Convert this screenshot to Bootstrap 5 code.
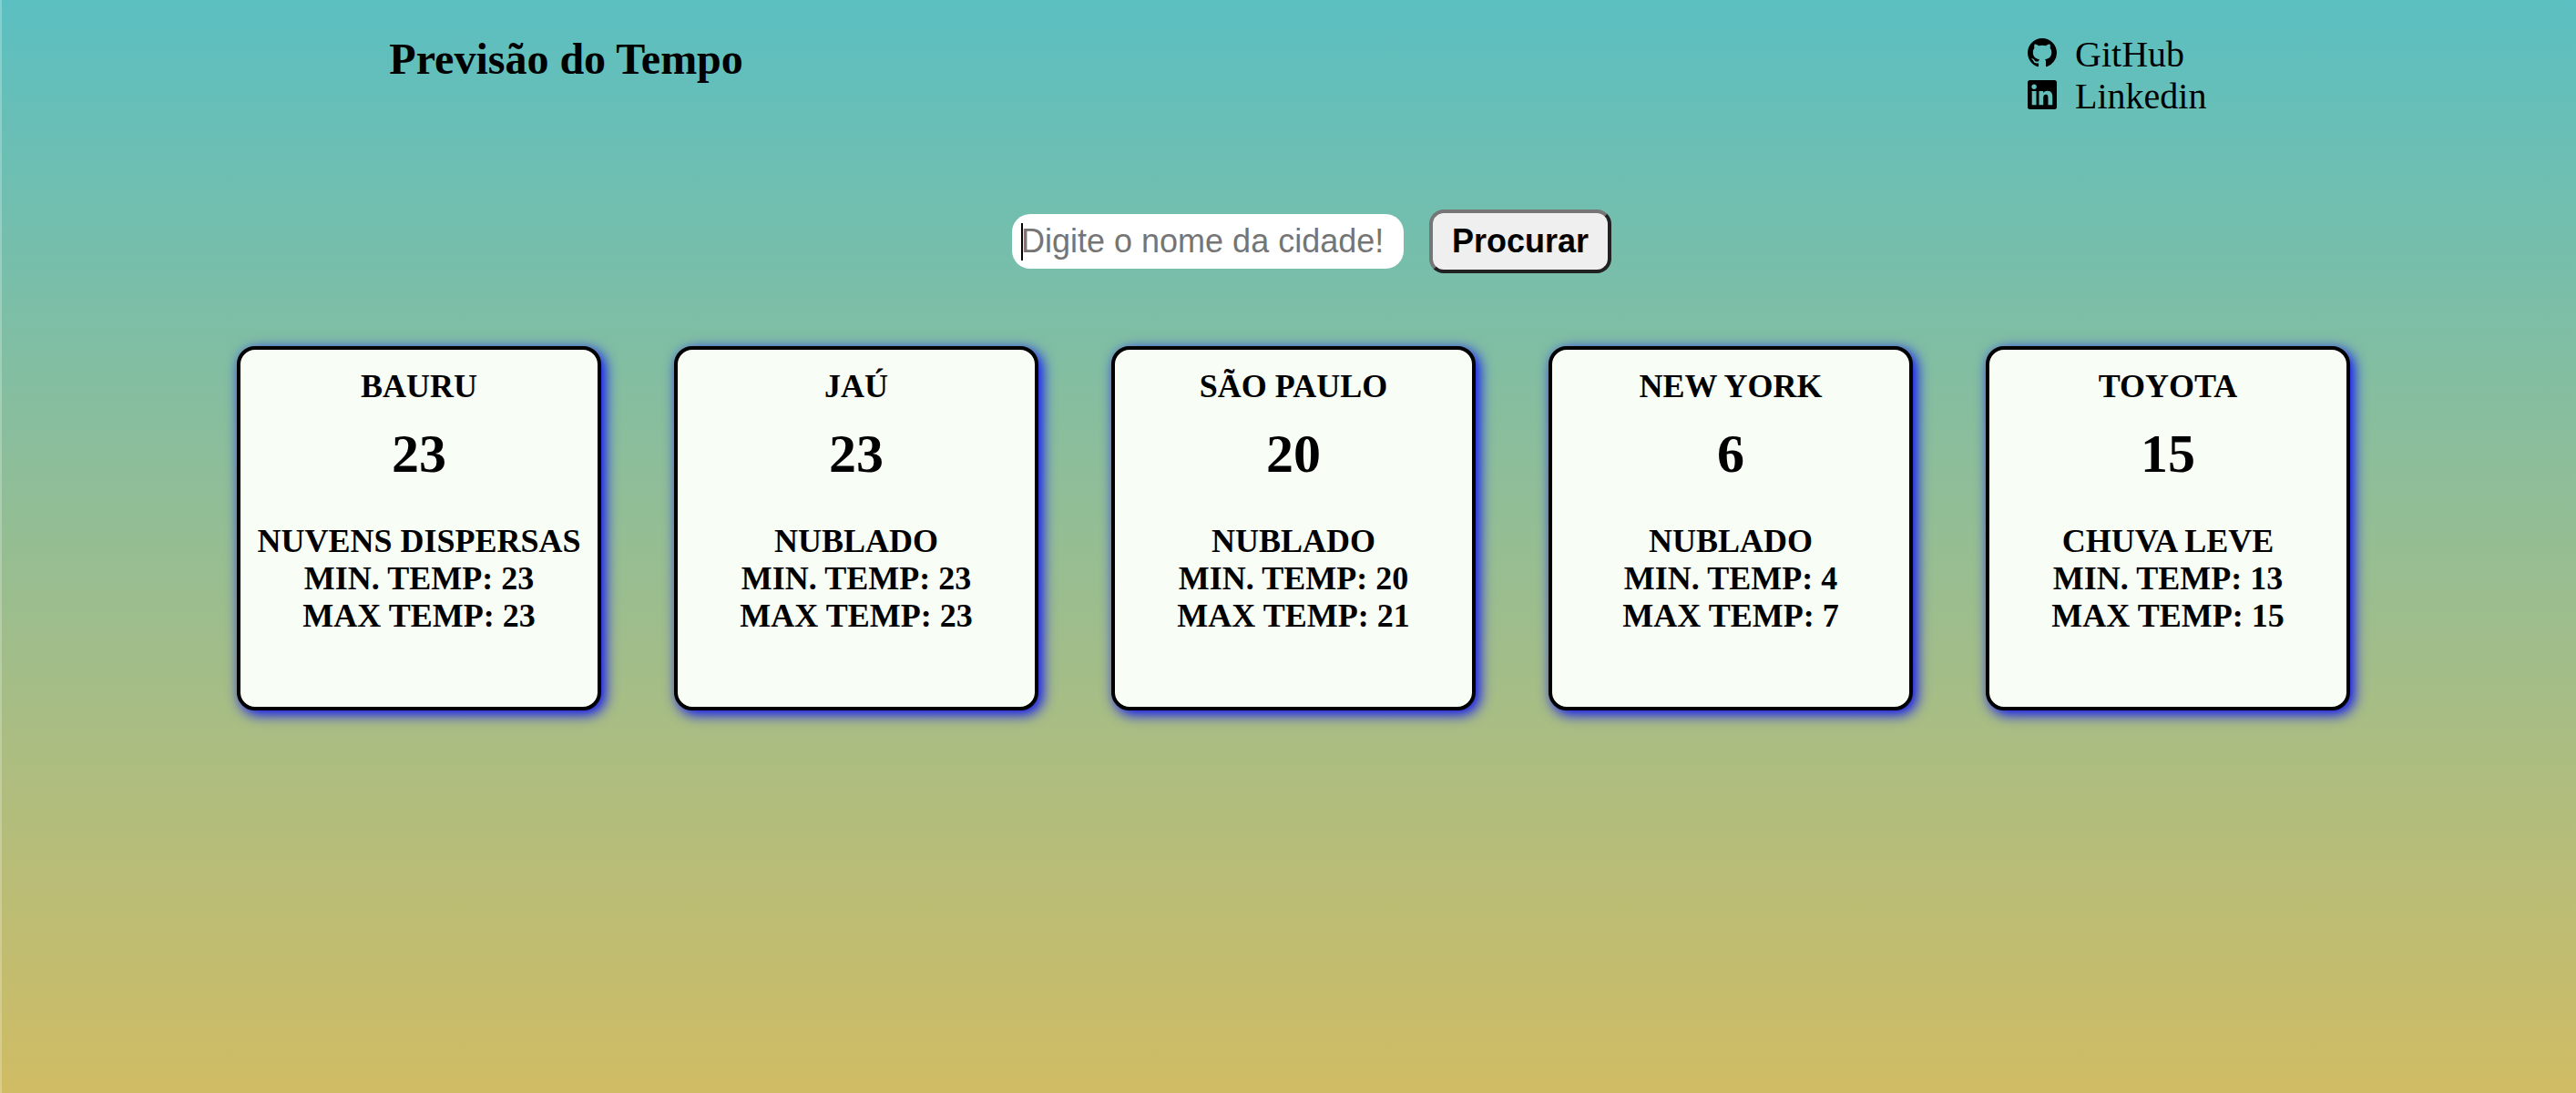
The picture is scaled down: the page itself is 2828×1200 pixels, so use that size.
<!DOCTYPE html>
<html lang="pt-BR">
<head>
<meta charset="utf-8">
<meta name="viewport" content="width=device-width, initial-scale=1">
<title>Previsão do Tempo</title>
<link href="https://cdn.jsdelivr.net/npm/bootstrap@5.3.0/dist/css/bootstrap.min.css" rel="stylesheet">
<style>
body {
  font-family: "Liberation Serif", "Times New Roman", serif;
  color: #000;
  background: linear-gradient(#5bbfc1, #d0bc64);
  border-left: 2px solid rgba(255, 255, 255, .25);
  background-origin: border-box;
}
.site-header { padding: 37px 406px 0 426px; padding-inline: 15.05% 14.35%; }
.site-title { font-size: 48px; line-height: 56px; font-weight: 700; }
.social-links { font-size: 40px; line-height: 46px; }
.social-links a { gap: 20px; }
.social-links svg { width: 32px; height: 32px; margin-bottom: 4px; }
.search-form {
  gap: 28px;
  margin: 101px 0 80px 50px;
  font-family: "Liberation Sans", Arial, sans-serif;
  font-size: 36px;
}
.city-input {
  width: 430px;
  height: 60px;
  padding: 0 10px;
  border: 0;
  border-radius: 20px;
  outline: 0;
  /* text caret at the start of the field */
  background: linear-gradient(#000, #000) 10px 50% / 2px 41px no-repeat #fff;
}
.city-input::placeholder { color: #757575; opacity: 1; }
.search-btn {
  width: 200px;
  height: 70px;
  padding: 0;
  font-weight: 700;
  color: #000;
  background: #efefef;
  border: 4px solid;
  border-color: #767676 #212121 #212121 #767676;
  border-radius: 16px;
}
.city-list { gap: 80px; padding: 0 0 80px 10px; }
.city-card {
  width: 400px;
  height: 400px;
  padding: 20px 0;
  background: #f8fdf5;
  border: 4px solid #000;
  border-radius: 20px;
  box-shadow: 4px 4px 15px #00f;
  font-weight: 700;
  text-transform: uppercase;
}
.city-name, .city-info { font-size: 36px; line-height: 41px; font-weight: 700; }
.city-temp { font-size: 60px; line-height: 70px; margin: 18px 0 41px; }
</style>
</head>
<body class="min-vh-100">
<header class="site-header d-flex justify-content-between align-items-start">
  <h1 class="site-title m-0">Previsão do Tempo</h1>
  <ul class="social-links list-unstyled m-0">
    <li><a href="#" class="d-flex align-items-center text-reset text-decoration-none">
      <svg viewBox="0 0 16 16" fill="currentColor" aria-hidden="true"><path d="M8 0C3.58 0 0 3.58 0 8c0 3.54 2.29 6.53 5.47 7.59.4.07.55-.17.55-.38 0-.19-.01-.82-.01-1.49-2.01.37-2.53-.49-2.69-.94-.09-.23-.48-.94-.82-1.13-.28-.15-.68-.52-.01-.53.63-.01 1.08.58 1.23.82.72 1.21 1.87.87 2.33.66.07-.52.28-.87.51-1.07-1.78-.2-3.64-.89-3.64-3.95 0-.87.31-1.59.82-2.15-.08-.2-.36-1.02.08-2.12 0 0 .67-.21 2.2.82.64-.18 1.32-.27 2-.27s1.36.09 2 .27c1.53-1.04 2.2-.82 2.2-.82.44 1.1.16 1.92.08 2.12.51.56.82 1.27.82 2.15 0 3.07-1.87 3.75-3.65 3.95.29.25.54.73.54 1.48 0 1.07-.01 1.93-.01 2.2 0 .21.15.46.55.38A8.01 8.01 0 0 0 16 8c0-4.42-3.58-8-8-8"/></svg>
      GitHub</a></li>
    <li><a href="#" class="d-flex align-items-center text-reset text-decoration-none">
      <svg viewBox="0 0 16 16" fill="currentColor" aria-hidden="true"><path d="M0 1.146C0 .513.526 0 1.175 0h13.65C15.474 0 16 .513 16 1.146v13.708c0 .633-.526 1.146-1.175 1.146H1.175C.526 16 0 15.487 0 14.854zM4.75 13.6V6H2.35v7.6zM3.55 5c.8 0 1.4-.6 1.4-1.38s-.6-1.37-1.4-1.37-1.4.6-1.4 1.37S2.75 5 3.55 5zM8.6 13.6V9.85c0-1 .2-1.95 1.42-1.95 1.2 0 1.22 1.12 1.22 2.02v3.68h2.4V9.45c0-2.05-.45-3.62-2.84-3.62-1.15 0-1.92.63-2.24 1.22h-.03V6H6.25v7.6z"/></svg>
      Linkedin</a></li>
  </ul>
</header>
<main>
  <form class="search-form d-flex justify-content-center align-items-center">
    <input class="city-input" id="cidade" type="text" aria-label="Cidade" placeholder="Digite o nome da cidade!">
    <button class="search-btn" type="button">Procurar</button>
  </form>
  <section class="city-list d-flex flex-wrap justify-content-center text-center">
    <article class="city-card"><h2 class="city-name m-0">Bauru</h2><p class="city-temp">23</p><p class="city-info m-0">Nuvens dispersas<br>Min. temp: 23<br>Max temp: 23</p></article>
    <article class="city-card"><h2 class="city-name m-0">Jaú</h2><p class="city-temp">23</p><p class="city-info m-0">Nublado<br>Min. temp: 23<br>Max temp: 23</p></article>
    <article class="city-card"><h2 class="city-name m-0">São Paulo</h2><p class="city-temp">20</p><p class="city-info m-0">Nublado<br>Min. temp: 20<br>Max temp: 21</p></article>
    <article class="city-card"><h2 class="city-name m-0">New York</h2><p class="city-temp">6</p><p class="city-info m-0">Nublado<br>Min. temp: 4<br>Max temp: 7</p></article>
    <article class="city-card"><h2 class="city-name m-0">Toyota</h2><p class="city-temp">15</p><p class="city-info m-0">Chuva leve<br>Min. temp: 13<br>Max temp: 15</p></article>
  </section>
</main>
<script src="https://cdn.jsdelivr.net/npm/bootstrap@5.3.0/dist/js/bootstrap.bundle.min.js"></script>
</body>
</html>
